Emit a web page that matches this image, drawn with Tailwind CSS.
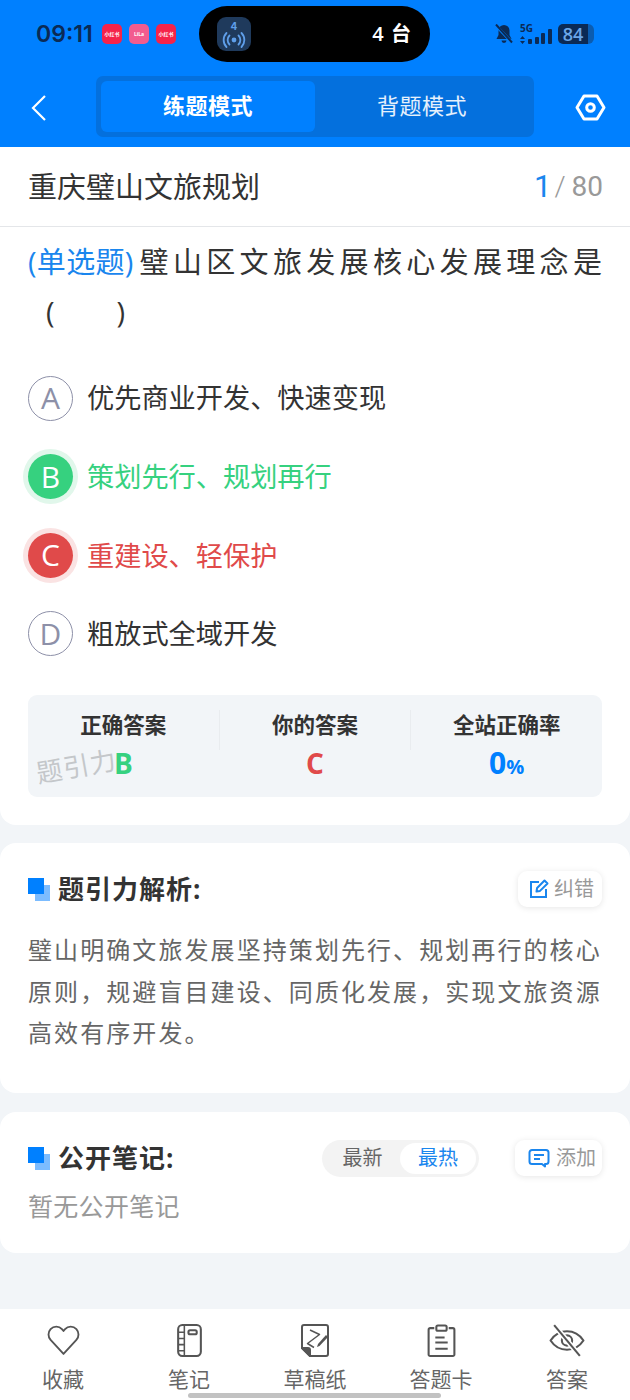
<!DOCTYPE html>
<html lang="zh-CN">
<head>
<meta charset="UTF-8" />
<meta name="viewport" content="width=device-width, initial-scale=1.0" />
<title>练题模式</title>
<script src="https://cdn.jsdelivr.net/npm/@tailwindcss/browser@4"></script>
</head>
<body class="bg-[#f2f5f8] font-['Open_Sans','Noto_Sans_CJK_SC',sans-serif]">
<div class="relative w-[630px] h-[1400px] overflow-hidden flex flex-col">

  <!-- header -->
  <header class="h-[147px] shrink-0 bg-[#0080ff] flex flex-col">
    <div class="h-[62px] pt-[6px] pl-[36px] pr-[36px] flex items-center">
      <span class="w-[57px] text-[23px] font-semibold leading-none text-[#0b2a55] font-['Inter']">09:11</span>
      <div class="ml-[9px] flex gap-[7px]">
        <div class="w-[20px] h-[20px] rounded-[5px] bg-[#f5234a] text-white text-[5px] font-bold flex items-center justify-center leading-none">小红书</div>
        <div class="w-[20px] h-[20px] rounded-[5px] bg-[#f25c8f] text-white text-[5px] font-bold flex items-center justify-center leading-none">LiLa</div>
        <div class="w-[20px] h-[20px] rounded-[5px] bg-[#f5234a] text-white text-[5px] font-bold flex items-center justify-center leading-none">小红书</div>
      </div>
      <div class="ml-[23px] w-[231px] h-[56px] rounded-[28px] bg-black flex items-center pl-[18px] pr-[18px] justify-between">
        <div class="w-[34px] h-[34px] rounded-[9px] bg-[#1f3a5c] flex items-center justify-center">
          <svg width="26" height="30" viewBox="0 0 26 30" fill="none" stroke="#5f9fea" stroke-width="1.8">
            <text x="13" y="11" text-anchor="middle" font-size="10" font-weight="700" fill="#5f9fea" stroke="none" font-family="Inter">4</text>
            <circle cx="13" cy="21" r="2.4" fill="#5f9fea" stroke="none" />
            <path d="M8.5 16.5a6.4 6.4 0 0 0 0 9M17.5 16.5a6.4 6.4 0 0 1 0 9M5.5 14a10 10 0 0 0 0 14M20.5 14a10 10 0 0 1 0 14" stroke-linecap="round" />
          </svg>
        </div>
        <span class="text-white text-[20px] font-semibold leading-none tracking-[1px]">4 台</span>
      </div>
      <div class="ml-auto flex items-center">
        <svg width="18" height="20" viewBox="0 0 18 20" fill="#0b2a55" class="mr-[7px]">
          <path d="M9 1a5.500 5.500 0 0 0-5.500 5.500V11L1.500 15h15l-2-4V6.500A5.500 5.500 0 0 0 9 1zM6.500 16.500h5a2.500 2.500 0 0 1-5 0z" />
          <path d="M1 1.500l16 17" stroke="#0080ff" stroke-width="3" />
          <path d="M1 0.500l16 18" stroke="#0b2a55" stroke-width="2" />
        </svg>
        <div class="w-[8px] h-[20px] flex flex-col justify-between">
          <span class="text-[10px] font-bold leading-[9px] text-[#0b2a55] whitespace-nowrap">5G</span>
          <svg width="5" height="8" viewBox="0 0 5 8" fill="#0b2a55"><path d="M2.500 0L5 3H0zM2.500 8L0 5h5z" /></svg>
        </div>
        <div class="flex items-end gap-[2.67px] h-[20px]">
          <i class="block w-[4px] h-[5px] rounded-[1px] bg-[#0b2a55]"></i>
          <i class="block w-[4px] h-[7px] rounded-[1px] bg-[#0b2a55]"></i>
          <i class="block w-[4px] h-[11px] rounded-[1px] bg-[#0b2a55]"></i>
          <i class="block w-[4px] h-[15px] rounded-[1px] bg-[#0b2a55]"></i>
        </div>
        <div class="ml-[6px] w-[30px] h-[20px] rounded-l-[5px] bg-[#0b2a55] text-[#6ba6e8] text-[18px] font-semibold leading-none flex items-center justify-center">84</div>
        <div class="w-[6px] h-[20px] rounded-r-[6px] bg-[#0b5cb0]"></div>
      </div>
    </div>
    <div class="flex-1 relative flex items-start pt-[14px]">
      <svg class="absolute left-[30px] top-[32px]" width="18" height="28" viewBox="0 0 18 28" fill="none" stroke="#fff" stroke-width="2.200"><path d="M15 2L3 14l12 12" /></svg>
      <div class="ml-[96px] w-[438px] h-[61px] rounded-[7px] bg-[#0470dd] p-[5px] flex">
        <div class="w-[214px] h-[51px] pb-[2px] rounded-[6px] bg-[#0080ff] text-white text-[22px] tracking-[0.5px] font-bold flex items-center justify-center">练题模式</div>
        <div class="flex-1 pb-[2px] text-white/90 text-[22px] tracking-[0.5px] flex items-center justify-center">背题模式</div>
      </div>
      <svg class="absolute left-[575px] top-[32px]" width="31" height="27" viewBox="0 0 31 27" fill="none" stroke="#fff" stroke-width="3"><path d="M9 2h13l7 11.500L22 25H9L2 13.500z" stroke-linejoin="round" /><circle cx="15.500" cy="13.500" r="3.800" /></svg>
    </div>
  </header>

  <!-- question card -->
  <section class="h-[678px] shrink-0 bg-white rounded-b-[16px]">
    <div class="h-[80px] px-[28px] border-b border-[#e4e6e9] flex items-center justify-between">
      <h1 class="text-[29px] text-[#333] leading-none">重庆璧山文旅规划</h1>
      <div class="flex items-center leading-none text-[#999] text-[28px] font-['Roboto'] font-light"><span class="text-[#1a86ee] text-[31px] font-normal">1</span><span class="ml-[3px] mr-[6px]">/</span><span class="mr-[-1px] font-normal">80</span></div>
    </div>
    <div class="px-[28px] pt-[10px] text-[29px] leading-[50px] text-[#333]">
      <p class="flex justify-between"><span class="text-[#1a86ee] tracking-[0.3px]">(单选题)</span><span class="flex-1 ml-[6px] flex justify-between"><span>璧</span><span>山</span><span>区</span><span>文</span><span>旅</span><span>发</span><span>展</span><span>核</span><span>心</span><span>发</span><span>展</span><span>理</span><span>念</span><span>是</span></span></p>
      <p class="pl-[18px]">(<span class="inline-block w-[62px]"></span>)</p>
    </div>
    <ul class="mt-[39px] pl-[28px] text-[27.2px] leading-none flex flex-col gap-[34.67px]">
      <li class="flex items-center h-[44px] gap-[14px] text-[#333]">
        <span class="w-[45px] h-[45px] rounded-full border border-[#8d90a8] text-[#8d90a8] text-[30px] font-normal flex items-center justify-center">A</span>优先商业开发、快速变现
      </li>
      <li class="flex items-center h-[44px] gap-[14px] text-[#36d17f]">
        <span class="w-[45px] h-[45px] rounded-full bg-[#36d17f] ring-[5px] ring-[#e1f7eb] text-white text-[30px] font-normal flex items-center justify-center">B</span>策划先行、规划再行
      </li>
      <li class="flex items-center h-[44px] gap-[14px] text-[#e04a4a]">
        <span class="w-[45px] h-[45px] rounded-full bg-[#e04a4a] ring-[5px] ring-[#fae3e3] text-white text-[30px] font-normal flex items-center justify-center">C</span>重建设、轻保护
      </li>
      <li class="flex items-center h-[44px] gap-[14px] text-[#333]">
        <span class="w-[45px] h-[45px] rounded-full border border-[#8d90a8] text-[#8d90a8] text-[30px] font-normal flex items-center justify-center">D</span>粗放式全域开发
      </li>
    </ul>
    <div class="relative mx-[28px] mt-[39px] h-[102px] rounded-[9px] bg-[#f2f5f8] flex pt-[15px]">
      <div class="flex-1 flex flex-col items-center border-r border-[#e9ecef] h-[40px]">
        <span class="text-[21.5px] font-bold text-[#333] leading-[30px]">正确答案</span>
        <span class="text-[28px] font-bold text-[#36d17f] leading-[38px] mt-[4px]">B</span>
      </div>
      <div class="flex-1 flex flex-col items-center border-r border-[#e9ecef] h-[40px]">
        <span class="text-[21.5px] font-bold text-[#333] leading-[30px]">你的答案</span>
        <span class="text-[28px] font-bold text-[#e04a4a] leading-[38px] mt-[4px]">C</span>
      </div>
      <div class="flex-1 flex flex-col items-center">
        <span class="text-[21.5px] font-bold text-[#333] leading-[30px]">全站正确率</span>
        <span class="text-[30px] font-bold text-[#0080ff] leading-[38px] mt-[4px]">0<span class="text-[20px]">%</span></span>
      </div>
      <span class="absolute left-[8px] top-[58px] text-[26px] text-[#c4c7ca] leading-none -rotate-[10deg] tracking-[1px]">题引力</span>
    </div>
  </section>

  <!-- analysis card -->
  <section class="mt-[18px] h-[250px] shrink-0 bg-white rounded-[16px] px-[28px] pt-[28px]">
    <div class="flex items-center justify-between h-[36px]">
      <div class="flex items-center gap-[7px]">
        <span class="relative block w-[23px] h-[23px]"><i class="absolute left-[7px] top-[7px] w-[15px] h-[16px] bg-[#7cbcff]"></i><i class="absolute left-0 top-0 w-[16px] h-[16px] bg-[#0080ff]"></i></span>
        <h2 class="text-[26px] tracking-[1px] font-bold text-[#333] leading-none">题引力解析:</h2>
      </div>
      <button class="w-[84px] h-[36px] pl-[11px] rounded-[9px] bg-white shadow-[0_1px_6px_rgba(0,0,0,0.1)] flex items-center gap-[5px] text-[20px] text-[#999]">
        <svg width="20" height="20" viewBox="0 0 20 20" fill="none" stroke="#1a86ee" stroke-width="2"><path d="M10 3H2v15h15v-8" /><path d="M7.500 12.500l.6-3.500L15.500 1.500l3 3-7.500 7.400z" stroke-linejoin="round" /></svg>纠错
      </button>
    </div>
    <p class="mt-[22px] text-[24px] leading-[41.5px] text-[#666] tracking-[2.08px]">璧山明确文旅发展坚持策划先行、规划再行的核心原则，规避盲目建设、同质化发展，实现文旅资源高效有序开发。</p>
  </section>

  <!-- notes card -->
  <section class="mt-[19px] h-[141px] shrink-0 bg-white rounded-[16px] px-[28px] pt-[28px]">
    <div class="flex items-center h-[36px]">
      <div class="flex items-center gap-[7px]">
        <span class="relative block w-[23px] h-[23px]"><i class="absolute left-[7px] top-[7px] w-[15px] h-[16px] bg-[#7cbcff]"></i><i class="absolute left-0 top-0 w-[16px] h-[16px] bg-[#0080ff]"></i></span>
        <h2 class="text-[26px] tracking-[1px] font-bold text-[#333] leading-none">公开笔记:</h2>
      </div>
      <div class="ml-auto w-[157px] h-[37px] rounded-full bg-[#f3f3f3] p-[3px] flex text-[20px] leading-none">
        <span class="w-[75px] flex items-center justify-center text-[#666]">最新</span>
        <span class="w-[76px] rounded-full bg-white flex items-center justify-center text-[#1a86ee]">最热</span>
      </div>
      <button class="ml-[36px] w-[87px] h-[36px] pl-[13px] rounded-[9px] bg-white shadow-[0_1px_6px_rgba(0,0,0,0.1)] flex items-center gap-[6px] text-[20px] text-[#999]">
        <svg width="22" height="20" viewBox="0 0 22 20" fill="none" stroke="#1a86ee" stroke-width="2"><path d="M4 2h14a2.500 2.500 0 0 1 2.500 2.500v9A2.500 2.500 0 0 1 18 16h-1v2.500L14 16H4a2.500 2.500 0 0 1-2.500-2.500v-9A2.500 2.500 0 0 1 4 2z" stroke-linejoin="round" /><path d="M6 7h10M6 11h6" /></svg>添加
      </button>
    </div>
    <p class="mt-[10px] text-[25px] tracking-[0.3px] leading-[40px] text-[#999]">暂无公开笔记</p>
  </section>

  <!-- bottom tabs -->
  <nav class="absolute left-0 right-0 bottom-0 h-[91px] bg-white grid grid-cols-5 text-[21px] text-[#666]">
    <div class="flex flex-col items-center pt-[15px]">
      <svg width="33" height="33" viewBox="0 0 32 32" fill="none" stroke="#555" stroke-width="1.800"><path d="M16 29L3.500 15.500a7.800 7.800 0 0 1 0-10.500 7.500 7.500 0 0 1 11 0l1.500 1.800 1.500-1.800a7.500 7.500 0 0 1 11 0 7.800 7.800 0 0 1 0 10.500z" stroke-linejoin="round" /></svg>
      <span class="mt-[7px] leading-[30px]">收藏</span>
    </div>
    <div class="flex flex-col items-center pt-[15px]">
      <svg width="33" height="33" viewBox="0 0 32 32" fill="none" stroke="#555" stroke-width="2"><rect x="5" y="1" width="22" height="30" rx="4" /><path d="M11 1v30M5 8h6M5 14h6M5 20h6M5 26h6" stroke-width="1.500" /><rect x="15" y="6" width="8" height="4" rx="1.500" /></svg>
      <span class="mt-[7px] leading-[30px]">笔记</span>
    </div>
    <div class="flex flex-col items-center pt-[15px]">
      <svg width="28" height="33" viewBox="0 0 28 33" fill="none" stroke="#555" stroke-width="2"><path d="M1 24V3a2 2 0 0 1 2-2h22a2 2 0 0 1 2 2v27a2 2 0 0 1-2 2H9z" stroke-linejoin="round" /><path d="M1 24h6a2 2 0 0 1 2 2v6z" fill="#555" /><path d="M9 6l9.500 4.500L6.500 19.500l6.500 4" stroke-width="1.500" stroke-linejoin="round" /><path d="M17 20l8-9 2 2-8.500 9-2.500 1z" fill="#555" stroke="none" /></svg>
      <span class="mt-[7px] leading-[30px]">草稿纸</span>
    </div>
    <div class="flex flex-col items-center pt-[15px]">
      <svg width="33" height="33" viewBox="0 0 32 32" fill="none" stroke="#555" stroke-width="2"><path d="M9 4H5a1.500 1.500 0 0 0-1.500 1.500v24A1.500 1.500 0 0 0 5 31h22a1.500 1.500 0 0 0 1.500-1.500v-24A1.500 1.500 0 0 0 27 4h-4" /><rect x="11" y="1.500" width="10" height="5" rx="1.500" /><path d="M10 13h9M10 18h12M10 24h12" /></svg>
      <span class="mt-[7px] leading-[30px]">答题卡</span>
    </div>
    <div class="flex flex-col items-center pt-[15px]">
      <svg width="36" height="33" viewBox="0 0 35 32" fill="none" stroke="#555" stroke-width="2"><path d="M1.500 16C5.500 10 11 7 17.500 7s12 3 16 9c-4 6-9.500 9-16 9s-12-3-16-9z" stroke-linejoin="round" /><circle cx="17.500" cy="16" r="5" /><path d="M5 1l25 30" stroke="#fff" stroke-width="5" /><path d="M5 1l25 30" /></svg>
      <span class="mt-[7px] leading-[30px]">答案</span>
    </div>
  </nav>
  <div class="absolute left-[188px] bottom-[2px] w-[253px] h-[5px] rounded-full bg-[#c2c2c2]"></div>
</div>
</body>
</html>
